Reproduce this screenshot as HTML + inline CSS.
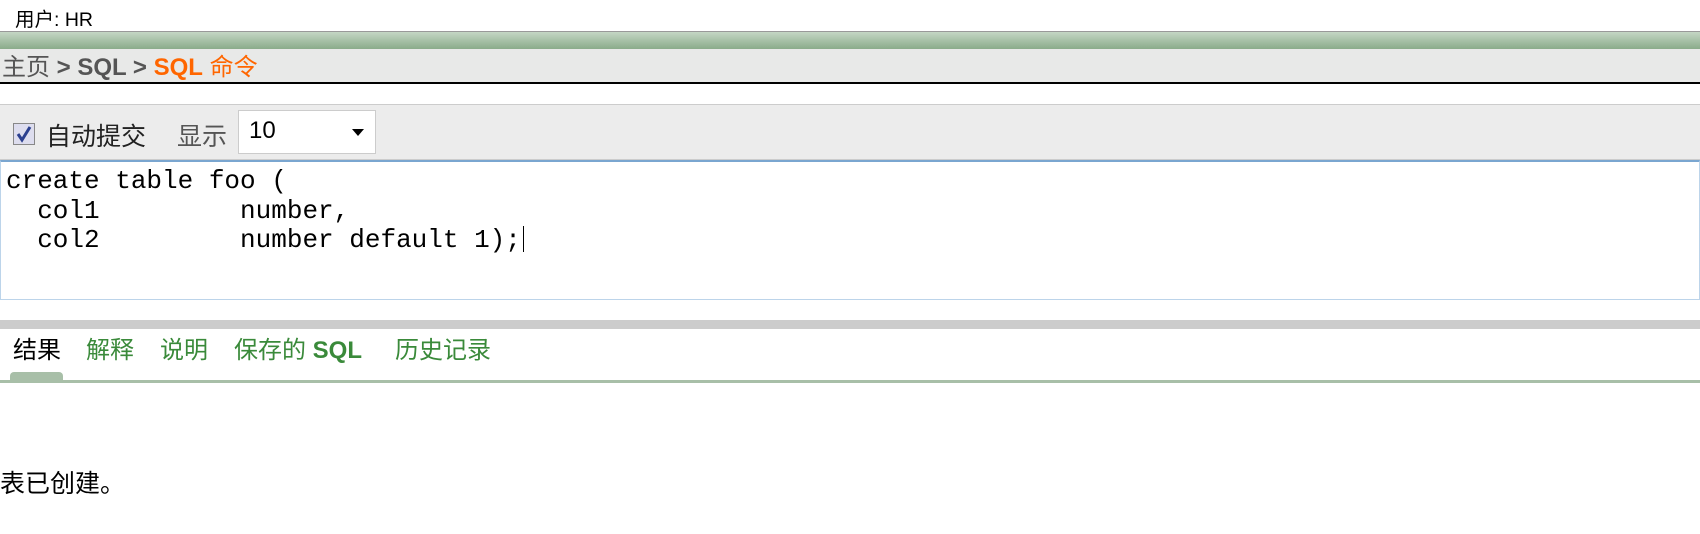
<!DOCTYPE html>
<html><head><meta charset="utf-8"><style>
body{margin:0;width:1700px;height:534px;background:#fff;position:relative;overflow:hidden;font-family:"Liberation Sans","Noto Sans CJK SC",sans-serif}
div,span{position:absolute}
.t{white-space:nowrap}
</style></head><body>
<span class="t" style="left:15px;top:3px;font-size:19.5px;color:#000">用户: HR</span>
<div style="left:0;top:31px;width:1700px;height:18px;background:linear-gradient(#c4d6c4,#8aab8a);border-top:1px solid #999;box-sizing:border-box"></div>
<div style="left:0;top:49px;width:1700px;height:33px;background:#e8e9e8;border-bottom:2px solid #000"></div>
<span class="t" style="left:2px;top:47px;font-size:24px;color:#555"><span style="position:static">主页</span> <b style="color:#555">&gt; SQL &gt;</b> <b style="color:#f60">SQL</b> <span style="position:static;color:#f60">命令</span></span>
<div style="left:0;top:104px;width:1700px;height:56px;background:#ececec;border-top:1px solid #ccc;border-bottom:1px solid #ccc;box-sizing:border-box"></div>
<div style="left:13px;top:123px;width:22px;height:22px;border:1px solid #888;background:#dde;box-sizing:border-box"></div>
<svg style="position:absolute;left:14px;top:124px" width="20" height="20"><path d="M4 10 L8 16 L16 3" stroke="#2b3f8f" stroke-width="3" fill="none"/></svg>
<span class="t" style="left:46px;top:117px;font-size:25px;color:#222">自动提交</span>
<span class="t" style="left:177px;top:117px;font-size:25px;color:#555">显示</span>
<div style="left:238px;top:110px;width:138px;height:44px;background:#fff;border:1px solid #ccc;box-sizing:border-box"></div>
<span class="t" style="left:249px;top:117px;font-size:24px;color:#000">10</span>
<svg style="position:absolute;left:352px;top:129px" width="12" height="8"><path d="M0 0 L12 0 L6 7Z" fill="#000"/></svg>
<div style="left:0;top:160px;width:1700px;height:140px;border:1px solid #bcd4ea;border-top:2px solid #7aa6d0;box-sizing:border-box"></div>
<pre style="position:absolute;left:6px;top:167px;margin:0;font-family:'Liberation Mono',monospace;font-size:26px;line-height:29.5px;color:#000">create table foo (
  col1         number,
  col2         number default 1);<span style="position:relative;display:inline-block;width:1px;height:26px;background:#000;vertical-align:-5px;margin-left:2px"></span></pre>
<div style="left:0;top:320px;width:1700px;height:9px;background:#ccc"></div>
<span class="t" style="left:13px;top:330px;font-size:24px;color:#000">结果</span>
<span class="t" style="left:86px;top:330px;font-size:24px;color:#3a8a3a">解释</span>
<span class="t" style="left:160px;top:330px;font-size:24px;color:#3a8a3a">说明</span>
<span class="t" style="left:234px;top:330px;font-size:24px;color:#3a8a3a">保存的 <b>SQL</b></span>
<span class="t" style="left:395px;top:330px;font-size:24px;color:#3a8a3a">历史记录</span>
<div style="left:10px;top:372px;width:53px;height:9px;background:#a8bfa8;border-radius:4px 4px 0 0"></div>
<div style="left:0;top:380px;width:1700px;height:3px;background:#a8bfa8"></div>
<span class="t" style="left:0;top:464px;font-size:25px;color:#000">表已创建。</span>
</body></html>
